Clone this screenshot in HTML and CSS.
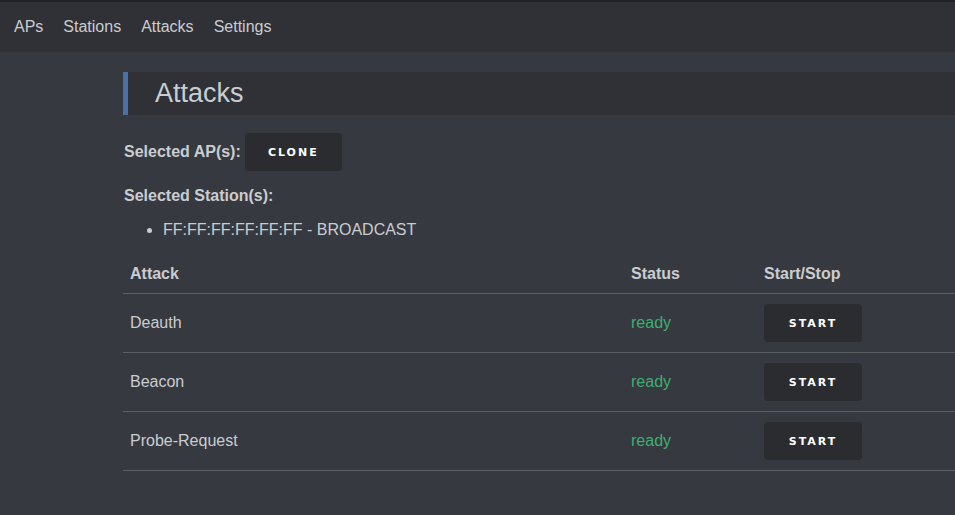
FILE: index.html
```html
<!DOCTYPE html>
<html>
<head>
<meta charset="utf-8">
<link rel="stylesheet" href="styles.css">
</head>
<body>
<nav class="nav">
  <a class="nav-link">APs</a>
  <a class="nav-link">Stations</a>
  <a class="nav-link">Attacks</a>
  <a class="nav-link">Settings</a>
</nav>
<main class="main">
  <h1 class="title">Attacks</h1>
  <div class="sel-row">
    <span class="label">Selected AP(s):</span>
    <button class="btn">CLONE</button>
  </div>
  <div class="label station-label">Selected Station(s):</div>
  <ul class="list">
    <li>FF:FF:FF:FF:FF:FF - BROADCAST</li>
  </ul>
  <table class="table">
    <thead>
      <tr><th class="c1">Attack</th><th class="c2">Status</th><th class="c3">Start/Stop</th></tr>
    </thead>
    <tbody>
      <tr><td>Deauth</td><td class="ready">ready</td><td><button class="btn btn-start">START</button></td></tr>
      <tr><td>Beacon</td><td class="ready">ready</td><td><button class="btn btn-start">START</button></td></tr>
      <tr><td>Probe-Request</td><td class="ready">ready</td><td><button class="btn btn-start">START</button></td></tr>
    </tbody>
  </table>
</main>
</body>
</html>
```
FILE: styles.css
```css
html, body {
  margin: 0;
  padding: 0;
}
body {
  background: #36393f;
  color: #c9cdd2;
  font-family: "Liberation Sans", Arial, sans-serif;
  font-size: 16px;
  border-top: 2px solid #202225;
  overflow: hidden;
}
.nav {
  background: #2f3136;
  height: 50px;
  display: flex;
  align-items: center;
  padding-left: 4px;
}
.nav-link {
  padding: 0 10px;
  color: #c9cdd2;
  font-size: 16px;
}
.main {
  padding: 20px 0 0 123px;
}
.title {
  margin: 0;
  background: #2f3136;
  border-left: 5px solid #4a71a5;
  height: 43px;
  line-height: 43px;
  font-size: 27px;
  font-weight: normal;
  padding-left: 27px;
  color: #c9cdd2;
}
.sel-row {
  margin-top: 18px;
  display: flex;
  align-items: center;
  gap: 4px;
  padding-left: 1px;
}
.label {
  font-weight: bold;
}
.btn {
  background: #2b2c30;
  color: #ffffff;
  border: none;
  border-radius: 4px;
  width: 97px;
  height: 38px;
  font-family: "DejaVu Sans", "Liberation Sans", sans-serif;
  font-weight: bold;
  font-size: 11px;
  letter-spacing: 2px;
  padding: 0;
}
.station-label {
  margin-top: 16px;
  height: 18px;
  line-height: 18px;
  padding-left: 1px;
}
.list {
  margin: 16px 0 0 0;
  padding-left: 40px;
  line-height: 18px;
}
.list li::marker {
  color: #c9cdd2;
}
.table {
  margin-top: 15px;
  border-collapse: collapse;
  width: 100%;
}
.table th {
  text-align: left;
  font-weight: bold;
  height: 39px;
  padding: 0 7px;
  vertical-align: middle;
  border-bottom: 1px solid #5b5e63;
}
.c1 { width: 487px; }
.c2 { width: 119px; }
.table td {
  height: 58px;
  padding: 0 7px;
  border-bottom: 1px solid #5b5e63;
  vertical-align: middle;
}
.ready {
  color: #3fae73;
}
.btn-start {
  width: 98px;
}
```
